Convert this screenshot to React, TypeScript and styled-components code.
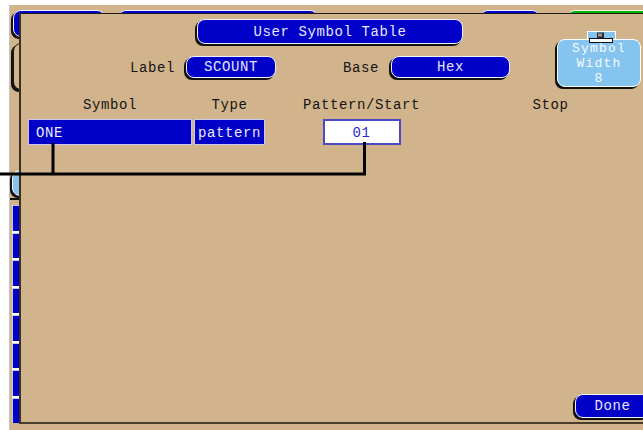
import React from "react";
import styled, { createGlobalStyle, css } from "styled-components";

const TAN = "#d2b48c";
const BLUE = "#0000c8";
const SKY = "#86c4f0";
const GREEN = "#00b400";
const INK = "#141414";
const FONT = `"Liberation Mono", "DejaVu Sans Mono", monospace`;

const Global = createGlobalStyle`
  html, body { margin: 0; padding: 0; background: #fff; }
  body { width: 643px; height: 430px; overflow: hidden; }
  * { box-sizing: border-box; }
`;

const Page = styled.div`
  position: relative;
  width: 643px;
  height: 430px;
  overflow: hidden;
  background: #fff;
  padding: 5px 0 0 9px;
  font-family: ${FONT};
  font-size: 14px;
  letter-spacing: 0.6px;
`;

/* ---------- underlying analyzer screen ---------- */

const Screen = styled.div`
  height: 100%;
  background: ${TAN};
  border-left: 1px solid #c4c4c4;
  padding: 5px 0 0 3px;
  display: flex;
  flex-direction: column;
`;

const KeyRow = styled.div`
  display: flex;
  height: 27px;
`;

type Tone = "blue" | "green" | "tan" | "sky";

const toneFill: Record<Tone, string> = {
  blue: BLUE,
  green: GREEN,
  tan: TAN,
  sky: SKY,
};

const ScreenKey = styled.div<{ $w: number; $h?: number; $tone: Tone; $ml?: number; $mt?: number }>`
  flex: none;
  width: ${(p) => p.$w}px;
  height: ${(p) => p.$h ?? 27}px;
  margin-left: ${(p) => p.$ml ?? 0}px;
  margin-top: ${(p) => p.$mt ?? 0}px;
  background: ${(p) => toneFill[p.$tone]};
  border: 1px solid ${(p) => (p.$tone === "tan" ? "#1a1a1a" : "#f2f2ff")};
  border-radius: 8px;
  box-shadow: -2px 2px 0 #111;
`;

const SideColumn = styled.div`
  display: flex;
  flex-direction: column;
  align-items: flex-start;
  margin-top: 6px;
`;

const SideRule = styled.div`
  width: 10px;
  height: 2px;
  margin: 2px 0 0 -3px;
  background: #111;
`;

const SegmentStack = styled.div`
  display: flex;
  flex-direction: column;
  gap: 2px;
  width: 10px;
  height: 218px;
  margin: 5px 0 0 -1px;
  background: #fff;
`;

const Segment = styled.div`
  flex: 1;
  background: ${BLUE};
  border-left: 1px solid #c8c8f4;
  border-top: 1px solid #c8c8f4;
`;

/* ---------- dialog ---------- */

const Dialog = styled.div`
  position: absolute;
  left: 19px;
  top: 13px;
  right: 0;
  height: 411px;
  background: ${TAN};
  border-top: 1px solid #1e1a14;
  border-left: 2px solid #3c3024;
  border-bottom: 2px solid #4a3c2c;
  display: flex;
  flex-direction: column;
  color: ${INK};
`;

const Header = styled.div`
  display: flex;
  align-items: flex-start;
`;

const HeaderMain = styled.div`
  flex: 1;
  display: flex;
  flex-direction: column;
`;

const TitleRow = styled.div`
  display: flex;
  padding-left: 176px;
  margin-top: 5px;
`;

const keyLook = css`
  display: flex;
  align-items: center;
  justify-content: center;
  background: ${BLUE};
  color: #e6e6ff;
  border: 1px solid #f0f0ff;
  border-radius: 8px;
  box-shadow: -2px 2px 0 #111;
  white-space: nowrap;
`;

const Key = styled.div<{ $w: number; $h: number }>`
  ${keyLook};
  width: ${(p) => p.$w}px;
  height: ${(p) => p.$h}px;
`;

const SettingRow = styled.div`
  display: grid;
  grid-template-columns: 56px 90px 115px 119px;
  align-items: center;
  margin-top: 12px;
  padding-left: 109px;
  height: 22px;
`;

const SettingName = styled.span`
  text-align: right;
  padding-right: 12px;
  padding-top: 2px;
`;

const WidthKey = styled.div`
  display: flex;
  flex-direction: column;
  align-items: center;
  margin: 17px 2px 0 0;
  width: 84px;
`;

const WidthTab = styled.div`
  display: flex;
  justify-content: center;
  align-items: flex-end;
  width: 29px;
  height: 8px;
  margin-left: 4px;
  background: ${SKY};
  border: 1px solid #fff;
  border-bottom: none;
  position: relative;
  z-index: 1;
`;

const TabIcon = styled.svg`
  display: block;
  margin-bottom: -5px;
`;

const WidthBody = styled.div`
  width: 84px;
  height: 48px;
  background: ${SKY};
  border: 1px solid #fff;
  border-radius: 8px;
  box-shadow: -2px 2px 0 #111;
  color: #f4faff;
  display: flex;
  flex-direction: column;
  align-items: center;
  padding-top: 1px;
  font-size: 13px;
  letter-spacing: 1.2px;
`;

const WidthLine = styled.div`
  height: 15px;
  line-height: 15px;
`;

const Table = styled.div`
  display: grid;
  grid-template-columns: 164px 75px 189px 189px;
  grid-template-rows: 14px 26px;
  row-gap: 8px;
  justify-items: center;
  padding-left: 7px;
  margin-top: 10px;
`;

const ColumnHead = styled.div`
  line-height: 14px;
  white-space: nowrap;
  padding-top: 1px;
`;

const Field = styled.div<{ $w?: number; $light?: boolean; $align?: "left" | "center" }>`
  display: flex;
  align-items: center;
  justify-content: ${(p) => (p.$align === "left" ? "flex-start" : "center")};
  justify-self: ${(p) => (p.$w ? "center" : "stretch")};
  width: ${(p) => (p.$w ? `${p.$w}px` : "auto")};
  height: 26px;
  padding: 1px 0 0 ${(p) => (p.$align === "left" ? 7 : 0)}px;
  background: ${(p) => (p.$light ? "#fff" : BLUE)};
  color: ${(p) => (p.$light ? "#2a2ac8" : "#ececff")};
  border: ${(p) => (p.$light ? "2px solid #4a4ac6" : "1px solid #c8c8f0")};
  white-space: nowrap;
`;

const Footer = styled.div`
  margin-top: auto;
  display: flex;
  justify-content: flex-end;
  padding-bottom: 4px;
  margin-right: -7px;
`;

const Wiring = styled.svg`
  position: absolute;
  left: 0;
  top: 0;
  pointer-events: none;
`;

export default function App() {
  return (
    <Page>
      <Global />
      <Screen>
        <KeyRow>
          <ScreenKey $tone="blue" $w={92} />
          <ScreenKey $tone="blue" $w={200} $ml={13} />
          <ScreenKey $tone="blue" $w={60} $ml={162} />
          <ScreenKey $tone="green" $w={90} $ml={27} />
        </KeyRow>
        <SideColumn>
          <ScreenKey $tone="tan" $w={80} $h={47} />
          <ScreenKey $tone="sky" $w={80} $h={26} $ml={-1} $mt={80} />
          <SideRule />
          <SegmentStack>
            {Array.from({ length: 8 }, (_, i) => (
              <Segment key={i} />
            ))}
          </SegmentStack>
        </SideColumn>
      </Screen>

      <Dialog>
        <Header>
          <HeaderMain>
            <TitleRow>
              <Key $w={266} $h={25}>User Symbol Table</Key>
            </TitleRow>
            <SettingRow>
              <SettingName>Label</SettingName>
              <Key $w={90} $h={22}>SCOUNT</Key>
              <SettingName>Base</SettingName>
              <Key $w={119} $h={22}>Hex</Key>
            </SettingRow>
          </HeaderMain>
          <WidthKey>
            <WidthTab>
              <TabIcon width="24" height="12" viewBox="0 0 24 12">
                <rect x="8" y="0.5" width="7" height="6" fill="#2e2e2e" />
                <path d="M10 1.5v3M12 1.5v3" stroke="#fff" strokeWidth="1" />
                <rect x="0.5" y="6.5" width="23" height="4" fill="#fff" stroke="#111" strokeWidth="1" />
              </TabIcon>
            </WidthTab>
            <WidthBody>
              <WidthLine>Symbol</WidthLine>
              <WidthLine>Width</WidthLine>
              <WidthLine>8</WidthLine>
            </WidthBody>
          </WidthKey>
        </Header>

        <Table>
          <ColumnHead>Symbol</ColumnHead>
          <ColumnHead>Type</ColumnHead>
          <ColumnHead>Pattern/Start</ColumnHead>
          <ColumnHead>Stop</ColumnHead>
          <Field $align="left">ONE</Field>
          <Field $w={71}>pattern</Field>
          <Field $w={78} $light>01</Field>
        </Table>

        <Footer>
          <Key $w={75} $h={24}>Done</Key>
        </Footer>
      </Dialog>

      <Wiring width="643" height="430" viewBox="0 0 643 430">
        <path
          d="M53 143V175.5M0 174H366M364.5 142V175.5"
          stroke="#000"
          strokeWidth="3"
          fill="none"
        />
      </Wiring>
    </Page>
  );
}
